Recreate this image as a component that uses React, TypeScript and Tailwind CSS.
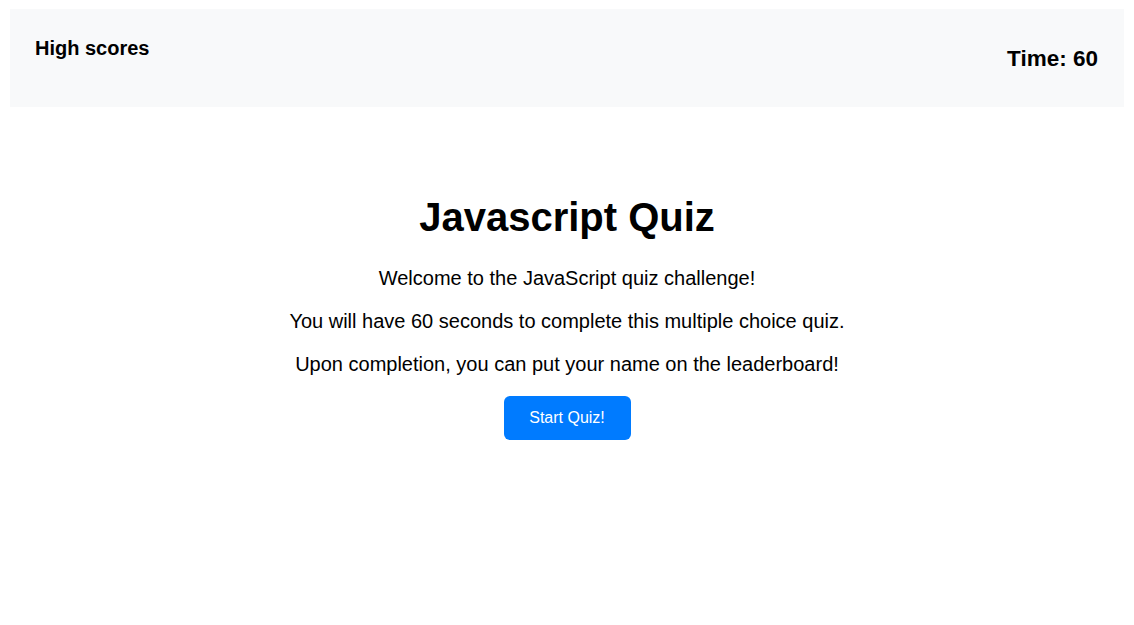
const intro = [
	"Welcome to the JavaScript quiz challenge!",
	"You will have 60 seconds to complete this multiple choice quiz.",
	"Upon completion, you can put your name on the leaderboard!",
];

const Header = () => {
	return (
		<header className="mx-[10px] mt-[9px] h-[98px] bg-[#f8f9fa] flex justify-between items-start pl-[25px] pr-[26px]">
			{/* HIGH SCORES LINK */}
			<a className="mt-[27px] text-[20px] leading-[24px] font-bold text-black cursor-pointer">
				High scores
			</a>

			{/* TIMER */}
			<div className="mt-[36px] text-[22.5px] leading-[27px] font-bold text-black">
				Time: 60
			</div>
		</header>
	);
};

const App = () => {
	return (
		<div className="min-h-[625px] bg-white text-black font-['Liberation_Sans',Arial,sans-serif]">
			<Header />

			<main className="flex flex-col items-center text-center">
				<h1 className="mt-[86px] text-[40px] leading-[48px] font-bold">Javascript Quiz</h1>

				<div className="mt-[26px] flex flex-col items-center gap-[20px]">
					{intro.map((line, index) => (
						<p key={index} className="text-[20px] leading-[23px]">
							{line}
						</p>
					))}
				</div>

				<button className="mt-[20px] h-[44px] w-[127px] rounded-[6px] bg-[#007bff] text-white text-[16px] leading-[24px]">
					Start Quiz!
				</button>
			</main>
		</div>
	);
};

export default App;
